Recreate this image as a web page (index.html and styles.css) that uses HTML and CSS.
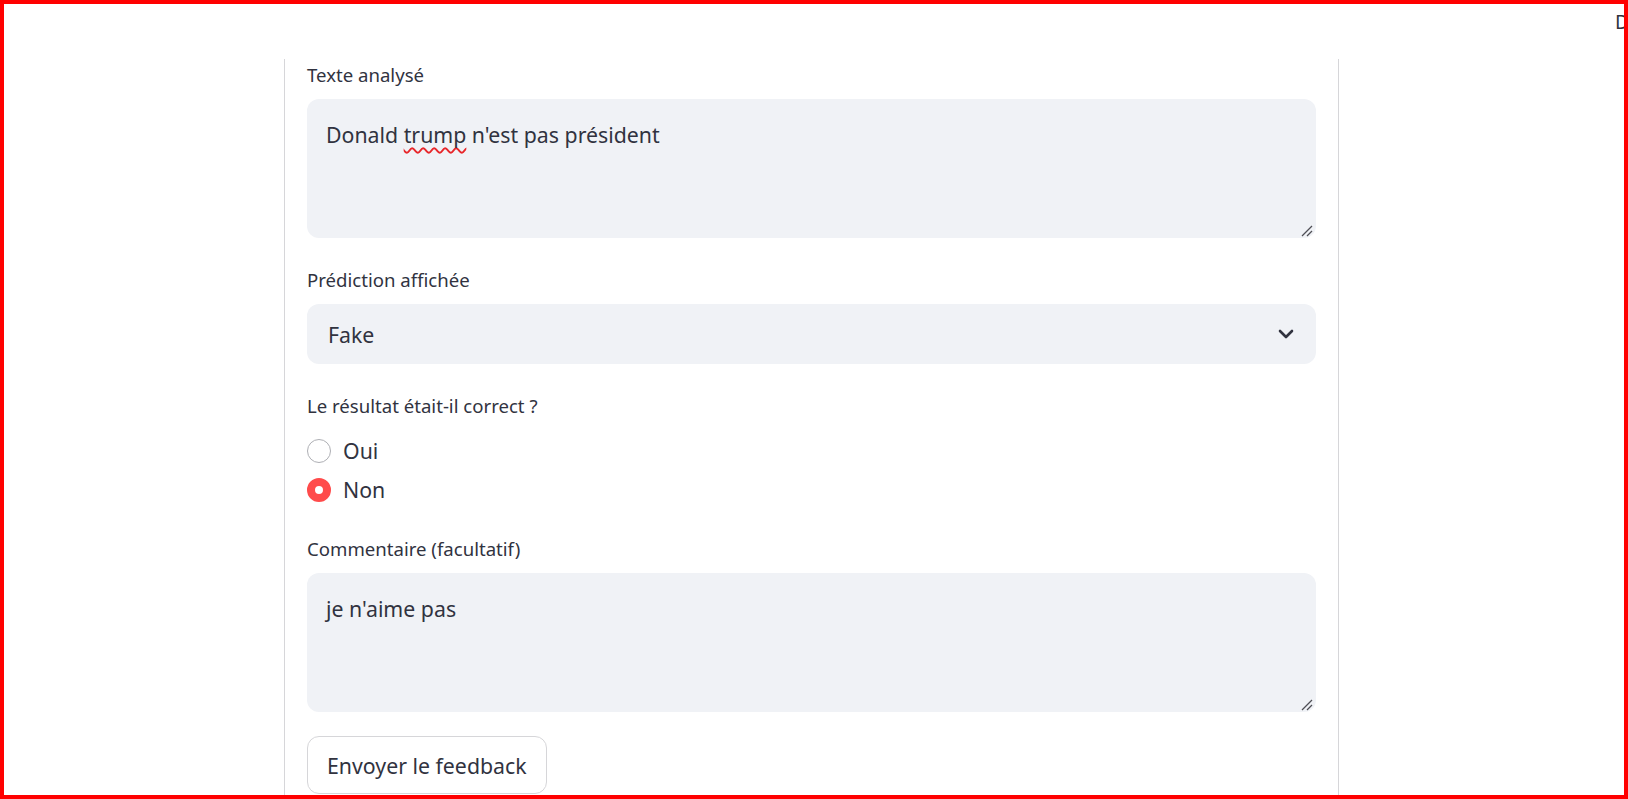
FILE: index.html
```html
<!DOCTYPE html>
<html lang="fr">
<head>
<meta charset="utf-8">
<title>Feedback</title>
<link rel="stylesheet" href="styles.css">
</head>
<body>
<div class="frame">
  <header class="header">
    <span class="deploy">Deploy</span>
  </header>
  <main class="main">
    <section class="container">
      <div class="field">
        <div class="label">Texte analysé</div>
        <div class="textarea">Donald <span class="misspelled">trump</span> n'est pas président<svg class="resize" width="12" height="12" viewBox="0 0 12 12"><line x1="11" y1="1" x2="1" y2="11"/><line x1="11" y1="6" x2="6" y2="11"/></svg></div>
      </div>
      <div class="field">
        <div class="label">Prédiction affichée</div>
        <div class="select">
          <span>Fake</span>
          <svg class="chevron" width="16" height="10" viewBox="0 0 16 10"><polyline points="2,2 8,8 14,2"/></svg>
        </div>
      </div>
      <div class="field">
        <div class="label">Le résultat était-il correct ?</div>
        <div class="radios">
          <div class="radio-row"><span class="radio"></span><span>Oui</span></div>
          <div class="radio-row"><span class="radio checked"></span><span>Non</span></div>
        </div>
      </div>
      <div class="field">
        <div class="label">Commentaire (facultatif)</div>
        <div class="textarea">je n'aime pas<svg class="resize" width="12" height="12" viewBox="0 0 12 12"><line x1="11" y1="1" x2="1" y2="11"/><line x1="11" y1="6" x2="6" y2="11"/></svg></div>
      </div>
      <div class="actions">
        <button class="button" type="button">Envoyer le feedback</button>
      </div>
    </section>
  </main>
</div>
</body>
</html>
```

FILE: styles.css
```css
html, body {
  margin: 0;
  padding: 0;
  background: #ffffff;
}

body {
  font-family: "Noto Sans", "Open Sans", sans-serif;
  color: #31333f;
}

.frame {
  box-sizing: border-box;
  height: 100vh;
  border: 4px solid #ff0000;
  overflow: hidden;
  display: flex;
  flex-direction: column;
  background: #ffffff;
}

.header {
  flex: none;
  height: 55px;
  box-sizing: border-box;
  padding-top: 4px;
  display: flex;
  justify-content: flex-end;
}

.deploy {
  width: 9px;
  white-space: nowrap;
  font-size: 19.5px;
  line-height: 28px;
  color: #31333f;
}

.main {
  flex: 1;
  min-height: 0;
  display: flex;
  padding-left: 280px;
}

.container {
  box-sizing: border-box;
  width: 1055px;
  height: 100%;
  border-left: 1px solid #d6d6d9;
  border-right: 1px solid #d6d6d9;
  padding: 2px 22px 0;
  display: flex;
  flex-direction: column;
  gap: 28px;
}

.field {
  display: flex;
  flex-direction: column;
}

.label {
  font-size: 18.6px;
  line-height: 27px;
  margin-bottom: 11px;
}

.textarea {
  position: relative;
  box-sizing: border-box;
  height: 139px;
  background: #f0f2f6;
  border-radius: 12px;
  padding: 19px 19px;
  font-size: 21.3px;
  line-height: 33px;
}

.misspelled {
  text-decoration: underline wavy #e8262a;
  text-decoration-thickness: 1.5px;
  text-decoration-skip-ink: none;
  text-underline-offset: 4px;
}

.resize {
  position: absolute;
  right: 3px;
  bottom: 1px;
  stroke: #4f4f55;
  stroke-width: 1.3;
}

.select {
  box-sizing: border-box;
  height: 60px;
  background: #f0f2f6;
  border-radius: 12px;
  padding: 0 22px 0 21px;
  display: flex;
  align-items: center;
  justify-content: space-between;
  font-size: 21.3px;
}

.chevron {
  fill: none;
  stroke: #31333f;
  stroke-width: 2.6;
  stroke-linecap: round;
  stroke-linejoin: round;
}

.radios {
  margin-top: 1px;
  margin-bottom: -2px;
  display: flex;
  flex-direction: column;
}

.radio-row {
  height: 39px;
  display: flex;
  align-items: center;
  gap: 12px;
  font-size: 21.3px;
}

.radio {
  box-sizing: border-box;
  width: 24px;
  height: 24px;
  border-radius: 50%;
  border: 1.5px solid #aeafb4;
  background: #ffffff;
}

.radio.checked {
  border: 8px solid #ff4b4b;
}

.actions {
  display: flex;
  margin-top: -4px;
}

.button {
  box-sizing: border-box;
  height: 58px;
  padding: 0 19px;
  border: 1px solid #d6d6d9;
  border-radius: 12px;
  background: #ffffff;
  color: #31333f;
  font-family: "Noto Sans", "Open Sans", sans-serif;
  font-size: 21.3px;
}
```
